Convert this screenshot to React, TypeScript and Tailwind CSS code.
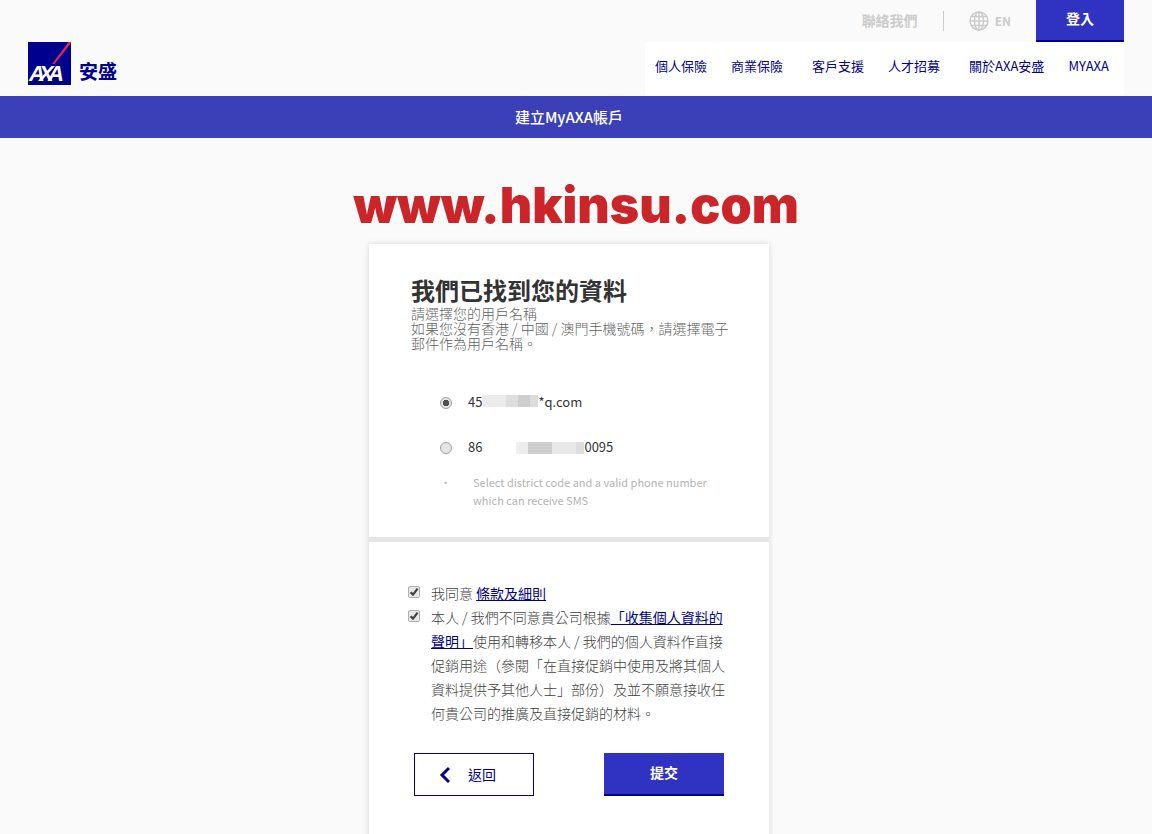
import { useState, type ReactNode } from "react";

const NAV_GROUPS = [
	["個人保險", "商業保險"],
	["客戶支援", "人才招募"],
	["關於AXA安盛", "MYAXA"],
];

function Logo() {
	return (
		<svg viewBox="0 0 43 43" className="size-[43px] shrink-0" aria-hidden="true">
			<rect width="43" height="43" fill="#00008f" />
			<path d="M40.5 0H43v1L26.6 22h-2.4z" fill="#e0284a" />
			<text x="1 11 20" y="39" fill="#fff" fontFamily="Liberation Sans, sans-serif" fontSize="22" fontWeight="700" fontStyle="italic">
				AXA
			</text>
		</svg>
	);
}

function GlobeIcon() {
	return (
		<svg viewBox="0 0 20 20" className="size-5" fill="none" stroke="currentColor" strokeWidth="1.5" aria-hidden="true">
			<circle cx="10" cy="10" r="9" />
			<ellipse cx="10" cy="10" rx="4.5" ry="9" />
			<path d="M10 1v18M1 10h18M2.5 5.5h15M2.5 14.5h15" />
		</svg>
	);
}

function Header() {
	return (
		<header className="flex justify-between pl-7 pr-7">
			<a href="#home" className="flex items-end gap-2 pb-[11px] text-[19px] leading-7 font-bold text-[#00008f]">
				<Logo />
				<span>安盛</span>
			</a>
			<div>
				<div className="flex h-[42px] items-center justify-end text-[14px] font-bold text-[#cccccc]">
					<a href="#contact" className="pb-0.5">
						聯絡我們
					</a>
					<span className="mx-[25px] h-5 w-px bg-[#cccccc]" />
					<a href="#en" className="mr-[25px] flex items-center gap-1.5 text-[12px]">
						<GlobeIcon />
						EN
					</a>
					<button type="button" className="h-[42px] w-[88px] border-b-2 border-[#00008f] bg-[#3032c1] pb-1 text-[14px] font-bold text-white">
						登入
					</button>
				</div>
				<nav className="flex h-[54px] justify-end gap-[29px] bg-white pl-2.5 pr-[15px] text-[13px] leading-[48px] text-[#00008f]">
					{NAV_GROUPS.map((group) => (
						<div key={group[0]} className="flex gap-6">
							{group.map((label) => (
								<a key={label} href="#nav">
									{label}
								</a>
							))}
						</div>
					))}
				</nav>
			</div>
		</header>
	);
}

function Radio({ id, checked, onChange }: { id: string; checked: boolean; onChange: () => void }) {
	return (
		<input
			id={id}
			type="radio"
			name="username"
			checked={checked}
			onChange={onChange}
			className="mt-0.5 size-3 shrink-0 appearance-none rounded-full border border-[#a0a0a0] bg-[#e4e4e4] checked:bg-[radial-gradient(circle,#505050_0_3px,#e4e4e4_3px)]"
		/>
	);
}

function Checkbox({ id }: { id: string }) {
	return (
		<span className="relative mt-[5px] mr-[11px] size-3 shrink-0">
			<input id={id} type="checkbox" defaultChecked className="peer block size-3 appearance-none rounded-xs border border-[#b0b0b0] bg-[#e8e8e8]" />
			<svg viewBox="0 0 12 12" className="pointer-events-none absolute inset-0 hidden size-3 peer-checked:block" fill="none" stroke="#404040" strokeWidth="2.2">
				<path d="M2.6 6.2 5 8.6l4.6-6" />
			</svg>
		</span>
	);
}

function TermsLink({ children }: { children: ReactNode }) {
	return (
		<a href="#terms" className="font-normal text-[#00008f] underline">
			{children}
		</a>
	);
}

function AccountCard() {
	const [selected, setSelected] = useState("email");

	return (
		<section className="bg-white pt-[30px] pr-[38px] pb-7 pl-[42px]">
			<h2 className="text-[24px] leading-8 font-bold text-[#333333]">我們已找到您的資料</h2>
			<p className="text-[14px] leading-[15px] font-light text-[#5f5f5f]">請選擇您的用戶名稱</p>
			<p className="text-[14px] leading-[15px] font-light text-[#5f5f5f]">如果您沒有香港 / 中國 / 澳門手機號碼，請選擇電子郵件作為用戶名稱。</p>
			<div className="mt-[41px] flex flex-col gap-[25px] pl-[29px] text-[13px] leading-5 text-[#333333]">
				<div className="flex items-center gap-4">
					<Radio id="email" checked={selected === "email"} onChange={() => setSelected("email")} />
					<label htmlFor="email" className="flex items-center">
						45
						<span className="mb-0.5 flex h-3">
							<span className="w-6 bg-[#ebebeb]" />
							<span className="w-3 bg-[#dedede]" />
							<span className="w-3 bg-[#cecece]" />
							<span className="w-2 bg-[#dcdcdc]" />
						</span>
						*q.com
					</label>
				</div>
				<div className="flex items-center gap-4">
					<Radio id="phone" checked={selected === "phone"} onChange={() => setSelected("phone")} />
					<label htmlFor="phone" className="flex items-center">
						86
						<span className="mt-0.5 ml-[34px] flex h-3">
							<span className="w-3 bg-[#ededed]" />
							<span className="w-6 bg-[#cecece]" />
							<span className="w-6 bg-[#e8e8e8]" />
							<span className="w-2 bg-[#dedede]" />
						</span>
						0095
					</label>
				</div>
			</div>
			<ul className="mt-4 pl-[29px] text-[11px] leading-[18px] text-[#b3b3b3]">
				<li className="flex gap-7">
					<span className="w-[5px]">•</span>
					<span className="w-60">Select district code and a valid phone number which can receive SMS</span>
				</li>
			</ul>
		</section>
	);
}

function ConsentCard() {
	return (
		<section className="bg-white px-[39px] pt-[39px] pb-16">
			<div className="text-[14px] leading-6 font-light text-[#404040]">
				<div className="flex">
					<Checkbox id="agree" />
					<label htmlFor="agree">
						我同意 <TermsLink>條款及細則</TermsLink>
					</label>
				</div>
				<div className="flex">
					<Checkbox id="marketing" />
					<label htmlFor="marketing">
						本人 / 我們不同意貴公司根據<TermsLink>「收集個人資料的聲明」</TermsLink>
						使用和轉移本人 / 我們的個人資料作直接促銷用途（參閱「在直接促銷中使用及將其個人資料提供予其他人士」部份）及並不願意接收任何貴公司的推廣及直接促銷的材料。
					</label>
				</div>
			</div>
			<div className="mt-7 flex justify-between px-1.5 text-[14px]">
				<button type="button" className="flex h-[43px] w-[120px] items-center gap-[18px] border border-[#00008f] bg-white pl-[23px] text-[#00008f]">
					<svg viewBox="0 0 12 18" className="h-[18px] w-3" fill="none" stroke="currentColor" strokeWidth="3" aria-hidden="true">
						<path d="M11 2 4 9l7 7" />
					</svg>
					返回
				</button>
				<button type="submit" className="h-[43px] w-[120px] border-b-2 border-[#00008f] bg-[#3032c1] pb-0.5 font-bold text-white">
					提交
				</button>
			</div>
		</section>
	);
}

export default function App() {
	return (
		<div lang="zh-Hant" className="min-h-screen bg-[#fafafa] font-['Noto_Sans_CJK_TC',sans-serif]">
			<Header />
			<h1 className="bg-[#3b3fb8] pr-[14px] text-center text-[15px] leading-[42px] font-medium text-white">建立MyAXA帳戶</h1>
			<p className="pt-9 text-center font-['Inter',sans-serif] text-[50px] leading-[62px] font-black text-[#cc2529]">www.hkinsu.com</p>
			<main className="mt-2 pr-[14px]">
				<form className="mx-auto flex max-w-[400px] flex-col gap-[5px] bg-[#e5e5e5] shadow-[0_0_6px_rgba(0,0,0,0.15)]" onSubmit={(e) => e.preventDefault()}>
					<AccountCard />
					<ConsentCard />
				</form>
			</main>
		</div>
	);
}
